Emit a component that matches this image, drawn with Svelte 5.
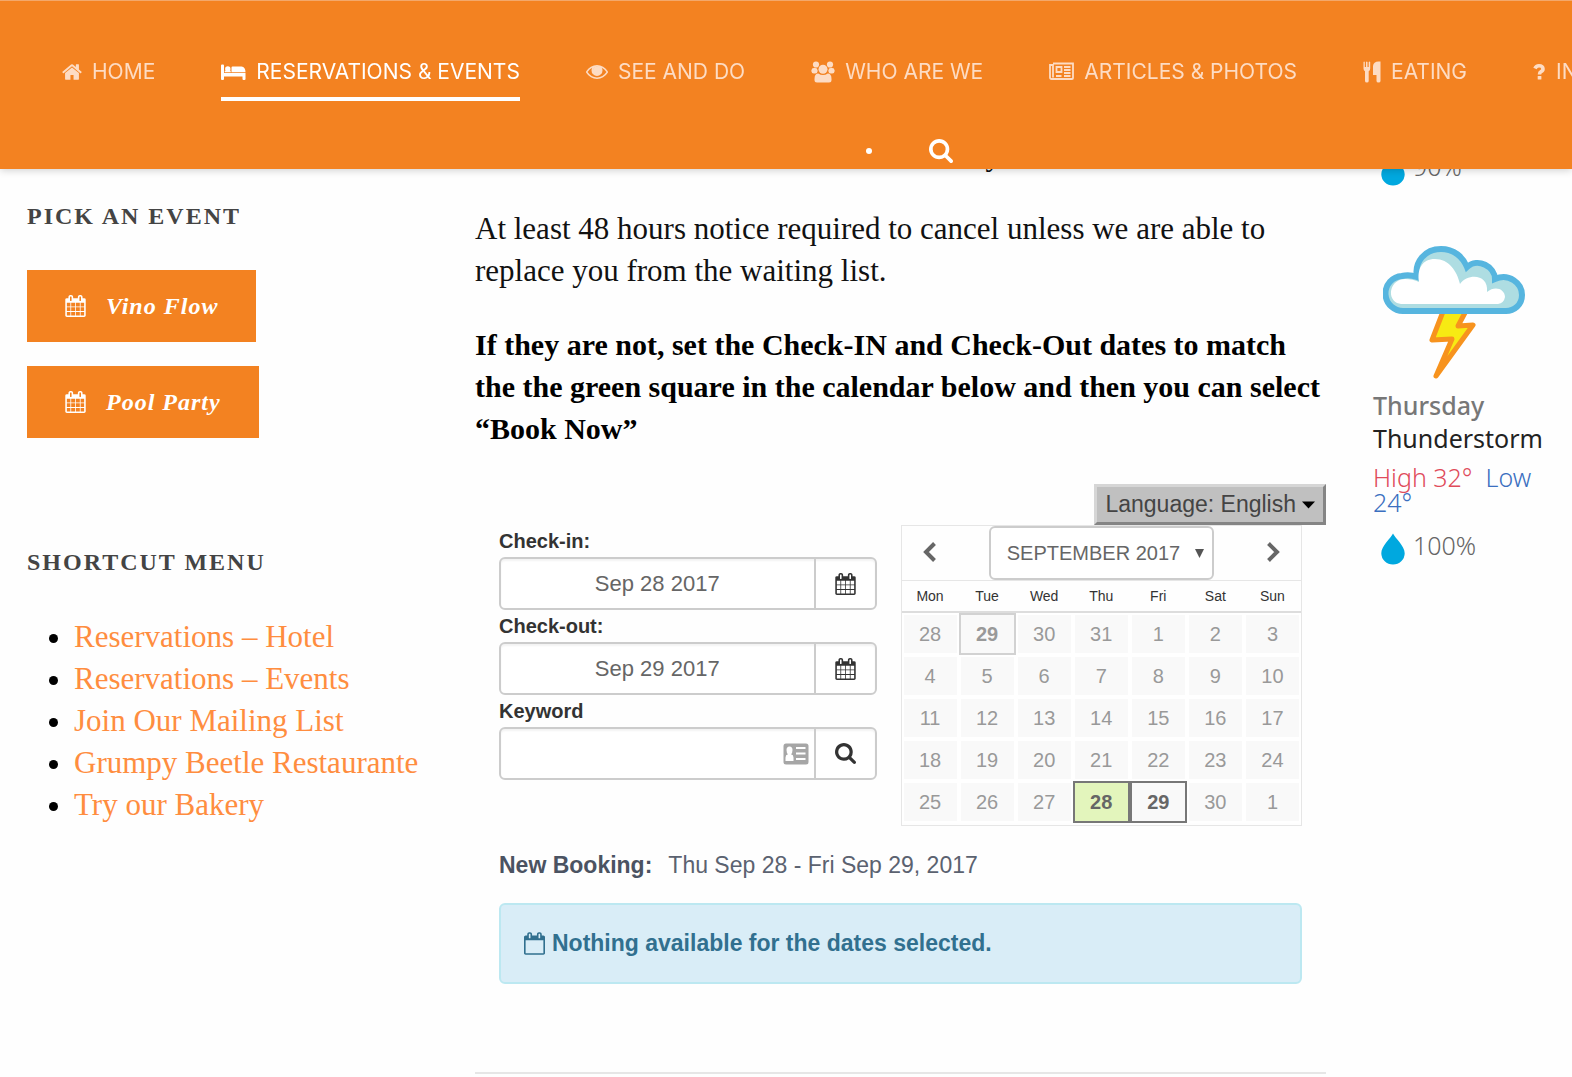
<script lang="ts">
	const navItems = [
		{ icon: 'home', label: 'HOME', active: false },
		{ icon: 'bed', label: 'RESERVATIONS & EVENTS', active: true },
		{ icon: 'eye', label: 'SEE AND DO', active: false },
		{ icon: 'users', label: 'WHO ARE WE', active: false },
		{ icon: 'news', label: 'ARTICLES & PHOTOS', active: false },
		{ icon: 'cutlery', label: 'EATING', active: false },
		{ icon: 'question', label: 'INFO', active: false }
	];

	const events = ['Vino Flow', 'Pool Party'];

	const shortcuts = [
		'Reservations – Hotel',
		'Reservations – Events',
		'Join Our Mailing List',
		'Grumpy Beetle Restaurante',
		'Try our Bakery'
	];

	const weekdays = ['Mon', 'Tue', 'Wed', 'Thu', 'Fri', 'Sat', 'Sun'];
	const weeks = [
		[28, 29, 30, 31, 1, 2, 3],
		[4, 5, 6, 7, 8, 9, 10],
		[11, 12, 13, 14, 15, 16, 17],
		[18, 19, 20, 21, 22, 23, 24],
		[25, 26, 27, 28, 29, 30, 1]
	];

	let checkIn = $state('Sep 28 2017');
	let checkOut = $state('Sep 29 2017');
	let keyword = $state('');

	function dayClass(week: number, day: number) {
		if (week === 0 && day === 29) return 'today';
		if (week === 4 && day === 28) return 'start';
		if (week === 4 && day === 29) return 'end';
		return '';
	}
</script>

{#snippet icon(name: string)}
	{#if name === 'home'}
		<svg class="icon" width="20" height="22" viewBox="64 0 1664 1792" aria-hidden="true">
			<path d="M1472 992v480q0 26-19 45t-45 19h-384v-384h-256v384h-384q-26 0-45-19t-19-45v-480q0-1 .5-3t.5-3l575-474 575 474q1 2 1 6zm223-69l-62 74q-8 9-21 11h-3q-13 0-21-7l-692-577-692 577q-12 8-24 7-13-2-21-11l-62-74q-8-10-7-23.5t11-21.5l719-599q32-26 76-26t76 26l244 204v-195q0-14 9-23t23-9h192q14 0 23 9t9 23v408l219 182q10 8 11 21.5t-7 23.5z" />
		</svg>
	{:else if name === 'bed'}
		<svg class="icon" width="25" height="22" viewBox="0 0 25 22" aria-hidden="true">
			<path d="M0 4.5Q0 3.500 1 3.500H2Q3 3.500 3 4.500V12H24.500V18Q24.500 19 23.500 19H22.500Q21.500 19 21.500 18V15.500H3V18Q3 19 2 19H1Q0 19 0 18ZM10.500 6.500Q10.500 5.500 11.500 5.500H20.500Q24.500 6 24.500 11.200H10.500ZM3.700 11.200V9.800H9.700V11.200Z" />
			<circle cx="6.800" cy="8" r="2.700" />
		</svg>
	{:else if name === 'eye'}
		<svg class="icon" width="22" height="22" viewBox="0 64 1792 1792" aria-hidden="true">
			<path d="M1664 960q-152-236-381-353 61 104 61 225 0 185-131.500 316.500t-316.500 131.500-316.500-131.500-131.500-316.500q0-121 61-225-229 117-381 353 133 205 333.500 326.500t434.500 121.500 434.500-121.500 333.500-326.500zm-720-384q0-20-14-34t-34-14q-125 0-214.500 89.500t-89.500 214.500q0 20 14 34t34 14 34-14 14-34q0-86 61-147t147-61q20 0 34-14t14-34zm848 384q0 34-20 69-140 230-376.500 368.500t-499.500 138.500-499.500-139-376.500-368q-20-35-20-69t20-69q140-229 376.500-368t499.500-139 499.500 139 376.500 368q20 35 20 69z" />
			<circle cx="896" cy="832" r="330" />
		</svg>
	{:else if name === 'users'}
		<svg class="icon" width="24" height="22" viewBox="0 0 24 22" aria-hidden="true">
			<circle cx="5" cy="3.500" r="3.100" />
			<circle cx="19" cy="3.500" r="3.100" />
			<rect x="0.500" y="7" width="6" height="5.500" rx="2.300" />
			<rect x="17.500" y="7" width="6" height="5.500" rx="2.300" />
			<circle cx="12" cy="8.200" r="4.500" />
			<path d="M3.500 18Q3.500 12.500 7.200 12.500Q12 15.500 16.800 12.500Q20.500 12.500 20.500 18V19Q20.500 21.500 18 21.500H6Q3.500 21.500 3.500 19Z" />
		</svg>
	{:else if name === 'news'}
		<svg class="icon line" width="25" height="22" viewBox="0 0 25 22" aria-hidden="true">
			<path d="M4 2.500H24V17Q24 18 23 18H2.500Q1 18 1 16.500V4H4V16.500" />
			<path d="M7.500 6H12.500V11H7.500ZM15 6H21.500M15 9H21.500M15 12H21.500M7 15H12.500M15 15H21.500" />
		</svg>
	{:else if name === 'cutlery'}
		<svg class="icon" width="18" height="22" viewBox="0 0 18 22" aria-hidden="true">
			<path d="M0.500 1Q1.200 0 1.800 1V6H3V1Q3.800 0 4.500 1V6H5.700V1Q6.500 0 7.200 1V7.500Q7.200 9.500 5.700 10.200V20Q5.700 21.500 3.900 21.500Q2 21.500 2 20V10.200Q0.500 9.500 0.500 7.500ZM10 5Q10.500 0.500 15.500 0.500H17.500V20Q17.500 21.500 15.500 21.500Q13.500 21.500 13.500 20V14H10Z" />
		</svg>
	{:else if name === 'question'}
		<svg class="icon" width="13" height="22" viewBox="0 0 13 22" aria-hidden="true">
			<path class="hook" d="M2 7.500Q3 4.800 6 4.800Q10 4.800 10 8Q10 9.800 8 10.700Q6.500 11.500 6.500 13.500" />
			<rect x="4.700" y="15" width="3.700" height="3.500" rx="0.500" />
		</svg>
	{:else if name === 'search'}
		<svg class="icon" width="24" height="24" viewBox="64 128 1664 1664" aria-hidden="true">
			<path d="M1216 832q0-185-131.500-316.500t-316.500-131.500-316.500 131.500-131.500 316.500 131.500 316.500 316.500 131.500 316.500-131.500 131.500-316.500zm512 832q0 52-38 90t-90 38q-54 0-90-38l-343-342q-179 124-399 124-143 0-273.500-55.500t-225-150-150-225-55.500-273.500 55.500-273.500 150-225 225-150 273.500-55.500 273.500 55.500 225 150 150 225 55.500 273.500q0 220-124 399l343 343q37 37 37 90z" />
		</svg>
	{:else if name === 'calendar'}
		<svg class="icon" width="21" height="22" viewBox="64 0 1664 1792" aria-hidden="true">
			<path d="M192 1664h288v-288h-288v288zm352 0h320v-288h-320v288zm-352-352h288v-320h-288v320zm352 0h320v-320h-320v320zm-352-384h288v-288h-288v288zm736 736h320v-288h-320v288zm-384-736h320v-288h-320v288zm768 736h288v-288h-288v288zm-384-352h320v-320h-320v320zm-352-864v-288q0-13-9.500-22.500t-22.500-9.500h-64q-13 0-22.500 9.500t-9.500 22.500v288q0 13 9.500 22.500t22.500 9.500h64q13 0 22.500-9.500t9.500-22.500zm736 864h288v-320h-288v320zm-384-384h320v-288h-320v288zm384 0h288v-288h-288v288zm32-480v-288q0-13-9.500-22.500t-22.500-9.500h-64q-13 0-22.500 9.500t-9.500 22.500v288q0 13 9.500 22.500t22.500 9.500h64q13 0 22.500-9.500t9.500-22.500zm384-64v1280q0 52-38 90t-90 38h-1408q-52 0-90-38t-38-90v-1280q0-52 38-90t90-38h128v-96q0-66 47-113t113-47h64q66 0 113 47t47 113v96h384v-96q0-66 47-113t113-47h64q66 0 113 47t47 113v96h128q52 0 90 38t38 90z" />
		</svg>
	{:else if name === 'calendar-o'}
		<svg class="icon" width="21" height="23" viewBox="64 0 1664 1792" aria-hidden="true">
			<path d="M192 1664h1408v-1024h-1408v1024zm384-1216v-288q0-13-9.500-22.500t-22.500-9.500h-64q-13 0-22.500 9.500t-9.500 22.500v288q0 13 9.500 22.500t22.500 9.500h64q13 0 22.500-9.500t9.500-22.500zm768 0v-288q0-13-9.500-22.500t-22.500-9.500h-64q-13 0-22.500 9.500t-9.500 22.500v288q0 13 9.500 22.500t22.500 9.500h64q13 0 22.500-9.500t9.500-22.500zm384-64v1280q0 52-38 90t-90 38h-1408q-52 0-90-38t-38-90v-1280q0-52 38-90t90-38h128v-96q0-66 47-113t113-47h64q66 0 113 47t47 113v96h384v-96q0-66 47-113t113-47h64q66 0 113 47t47 113v96h128q52 0 90 38t38 90z" />
		</svg>
	{:else if name === 'drop'}
		<svg width="24" height="32" viewBox="0 0 24 32" aria-hidden="true">
			<path fill="#00a8df" d="M12 0.500C14 5 23.700 13 23.700 20.300A11.700 11.200 0 0 1 0.300 20.300C0.300 13 10 5 12 0.500Z" />
		</svg>
	{/if}
{/snippet}

<header>
	<nav>
		<ul class="menu">
			{#each navItems as item}
				<li>
					<a href="#{item.icon}" class:active={item.active}>
						{@render icon(item.icon)}
						{item.label}
					</a>
				</li>
			{/each}
		</ul>
		<div class="tools">
			<span class="dot"></span>
			<button class="search" aria-label="Search">{@render icon('search')}</button>
		</div>
	</nav>
</header>

<div class="page">
	<aside class="sidebar">
		<section>
			<h2>PICK AN EVENT</h2>
			<div class="events">
				{#each events as event}
					<a class="event" href="#events">
						{@render icon('calendar')}
						{event}
					</a>
				{/each}
			</div>
		</section>
		<section>
			<h2>SHORTCUT MENU</h2>
			<ul class="shortcuts">
				{#each shortcuts as shortcut}
					<li><a href="#shortcut">{shortcut}</a></li>
				{/each}
			</ul>
		</section>
	</aside>

	<main>
		<!-- scrolled up behind the fixed header -->
		<p class="scrolled">y</p>
		<p>
			At least 48 hours notice required to cancel unless we are able to replace you from the
			waiting list.
		</p>
		<p class="strong">
			<strong>
				If they are not, set the Check-IN and Check-Out dates to match the the green square in the
				calendar below and then you can select “Book Now”
			</strong>
		</p>

		<div class="language-row">
			<button class="language">
				Language: English
				<svg width="13" height="8" viewBox="0 0 13 8" aria-hidden="true">
					<path d="M0 0.500H13L6.500 7.500Z" />
				</svg>
			</button>
		</div>

		<div class="booking">
			<form class="dates">
				<label for="check-in">Check-in:</label>
				<div class="group">
					<input id="check-in" type="text" bind:value={checkIn} />
					<button type="button" aria-label="Pick check-in date">{@render icon('calendar')}</button>
				</div>
				<label for="check-out">Check-out:</label>
				<div class="group">
					<input id="check-out" type="text" bind:value={checkOut} />
					<button type="button" aria-label="Pick check-out date">{@render icon('calendar')}</button>
				</div>
				<label for="keyword">Keyword</label>
				<div class="group">
					<input id="keyword" type="text" bind:value={keyword} />
					<svg class="card" width="26" height="22" viewBox="0 0 26 22" aria-hidden="true">
						<rect x="0.500" y="0.500" width="25" height="21" rx="2.500" fill="#a6a6a6" />
						<path
							fill="#fff"
							d="M13 4H22.500V6H13ZM13 9.500H22.500V11.500H13ZM13 15H22.500V17H13ZM2.500 18V14.500Q2.500 11.800 5 11.200Q3.500 10 3.500 7Q3.500 3.500 6.500 3.500Q9.500 3.500 9.500 7Q9.500 10 8 11.200Q10.500 11.800 10.500 14.500V18Z"
						/>
					</svg>
					<button type="button" class="find" aria-label="Search">{@render icon('search')}</button>
				</div>
			</form>

			<div class="calendar">
				<div class="month">
					<button aria-label="Previous month">
						<svg width="16" height="22" viewBox="0 0 16 22" aria-hidden="true">
							<path d="M12.500 2.500L4 11L12.500 19.500" />
						</svg>
					</button>
					<div class="month-select">
						<select aria-label="Month">
							<option>SEPTEMBER 2017</option>
						</select>
						<svg width="9" height="9" viewBox="0 0 9 9" aria-hidden="true">
							<path d="M0 0H9L4.500 9Z" />
						</svg>
					</div>
					<button aria-label="Next month">
						<svg width="16" height="22" viewBox="0 0 16 22" aria-hidden="true">
							<path d="M3.500 2.500L12 11L3.500 19.500" />
						</svg>
					</button>
				</div>
				<table>
					<thead>
						<tr>
							{#each weekdays as weekday}
								<th>{weekday}</th>
							{/each}
						</tr>
					</thead>
					<tbody>
						{#each weeks as week, i}
							<tr>
								{#each week as day}
									<td class={dayClass(i, day)}>{day}</td>
								{/each}
							</tr>
						{/each}
					</tbody>
				</table>
			</div>
		</div>

		<p class="summary">
			<strong>New Booking:</strong>
			<span>Thu Sep 28 - Fri Sep 29, 2017</span>
		</p>
		<div class="alert" role="status">
			{@render icon('calendar-o')}
			Nothing available for the dates selected.
		</div>
		<hr />
	</main>

	<aside class="weather">
		<div class="rain">{@render icon('drop')}<span>90%</span></div>
		<svg class="storm" width="144" height="136" viewBox="0 0 144 136" aria-hidden="true">
			<path
				fill="#f7ea13"
				stroke="#f7931e"
				stroke-width="5"
				stroke-linejoin="round"
				d="M61 64L49 95L69 94L53 131L90 80L75 81L84 64Z"
			/>
			<path
				fill="#aedde2"
				stroke="#56b5df"
				stroke-width="6"
				d="M21 66A17.500 17.500 0 0 1 19 31Q26 29 34 32C31 17 42 4 58 4C71 4 80 12 84 22C95 12 112 22 112 34C126 28 139 38 139 50C139 60 131 66 123 66Z"
			/>
			<path
				fill="#fff"
				d="M14 58C3 52 8 34 22 34Q30 34 36 37C34 24 39 14 52 14C66 14 74 26 77 39C85 28 106 29 104 47C112 40 122 44 122 52Q121 58 115 59H18Z"
			/>
		</svg>
		<div class="day">Thursday</div>
		<div class="condition">Thunderstorm</div>
		<div class="temps"><span class="high">High 32°</span>&nbsp; <span class="low">Low 24°</span></div>
		<div class="rain">{@render icon('drop')}<span>100%</span></div>
	</aside>
</div>

<style>
	:global(body) {
		background: #fefefe;
	}

	header {
		position: fixed;
		z-index: 10;
		top: 0;
		left: 0;
		right: 0;
		height: 169px;
		box-sizing: border-box;
		padding: 48px 0 0 62px;
		overflow: hidden;
		background: #f38221;
		border-top: 1px solid #f3a86b;
		box-shadow: 0 1px 8px rgba(0, 0, 0, 0.2);
	}

	ul {
		margin: 0;
		padding: 0;
	}

	.icon {
		flex-shrink: 0;
		fill: currentColor;
	}

	.icon.line {
		fill: none;
		stroke: currentColor;
		stroke-width: 1.8;
	}

	.hook {
		fill: none;
		stroke: currentColor;
		stroke-width: 3.6;
	}

	.menu {
		display: flex;
		gap: 66px;
		list-style: none;
	}

	.menu a {
		display: flex;
		align-items: center;
		gap: 10px;
		padding-bottom: 2px;
		border-bottom: 4px solid transparent;
		color: #fddcc4;
		font-family: Inter, sans-serif;
		font-size: 21px;
		line-height: 46px;
		text-decoration: none;
		white-space: nowrap;
	}

	.menu a.active {
		border-color: #fff;
		color: #fff;
	}

	.tools {
		display: flex;
		align-items: center;
		justify-content: center;
		gap: 57px;
		height: 36px;
		margin-top: 32px;
		padding-left: 185px;
	}

	.dot {
		width: 6px;
		height: 6px;
		border-radius: 50%;
		background: #fff;
	}

	button {
		padding: 0;
		border: 0;
		background: none;
		cursor: pointer;
	}

	.search {
		display: flex;
		color: #fff;
	}

	.page {
		display: grid;
		grid-template-columns: 401px minmax(0, 1fr) 199px;
		gap: 47px;
		padding: 134px 0 0 27px;
	}

	.sidebar {
		padding-top: 62px;
	}

	h2 {
		margin: 0 0 34px;
		color: #444;
		font: bold 24px/40px 'Liberation Serif', serif;
		letter-spacing: 2px;
	}

	.events {
		display: flex;
		flex-direction: column;
		align-items: flex-start;
		gap: 24px;
		padding-bottom: 104px;
	}

	.event {
		display: flex;
		align-items: center;
		gap: 20px;
		padding: 0 38px;
		background: #f38221;
		color: #fff;
		font: italic bold 24px/72px 'Liberation Serif', serif;
		letter-spacing: 1px;
		text-decoration: none;
	}

	.shortcuts {
		padding-left: 47px;
		font: 31px/42px 'Liberation Serif', serif;
	}

	.shortcuts a {
		color: #ff8d3f;
		text-decoration: none;
	}

	main {
		color: #111;
		font-family: 'Liberation Sans', sans-serif;
	}

	main p {
		margin: 0 0 32px;
		font: 31px/42px 'Liberation Serif', serif;
	}

	main .scrolled {
		padding-left: 60%;
	}

	main .strong {
		margin-bottom: 34px;
		color: #000;
		font-size: 30px;
	}

	.language-row {
		display: flex;
		justify-content: flex-end;
	}

	.language {
		display: flex;
		align-items: center;
		gap: 6px;
		padding: 0 8px;
		border: 3px solid;
		border-color: #d6d6d6 #858585 #858585 #d6d6d6;
		background: #c0c0c0;
		color: #444;
		font: 23px/35px 'Liberation Sans', sans-serif;
	}

	.booking {
		display: flex;
		gap: 24px;
		padding: 0 24px;
	}

	.dates {
		flex: 1;
		min-width: 0;
	}

	label {
		display: block;
		color: #333;
		font-size: 20px;
		font-weight: bold;
		line-height: 32px;
	}

	.group {
		display: flex;
		height: 53px;
		box-sizing: border-box;
		border: 2px solid #ccc;
		border-radius: 6px;
		background: #fff;
		box-shadow: inset 0 2px 2px rgba(0, 0, 0, 0.05);
	}

	.group input {
		flex: 1;
		min-width: 0;
		padding: 0;
		border: 0;
		background: none;
		color: #666;
		font: 22px 'Liberation Sans', sans-serif;
		text-align: center;
	}

	.group button {
		display: flex;
		align-items: center;
		justify-content: center;
		width: 61px;
		border-left: 2px solid #ccc;
		color: #333;
	}

	.find .icon {
		width: 21px;
		height: 21px;
	}

	.card {
		align-self: center;
		margin-right: 5px;
	}

	.calendar {
		width: 50%;
		box-sizing: border-box;
		padding-bottom: 2px;
		border: 1px solid #e6e6e6;
	}

	.month {
		display: flex;
		align-items: center;
		justify-content: space-between;
		height: 54px;
		border-bottom: 1px solid #e6e6e6;
	}

	.month button {
		width: 57px;
	}

	.month button path {
		fill: none;
		stroke: #666;
		stroke-width: 4;
	}

	.month-select {
		position: relative;
	}

	.month-select select {
		width: 225px;
		height: 54px;
		padding: 0 16px;
		appearance: none;
		border: 2px solid #ccc;
		border-radius: 6px;
		background: #fff;
		color: #666;
		font: 20px 'Liberation Sans', sans-serif;
	}

	.month-select svg {
		position: absolute;
		right: 10px;
		top: 23px;
		fill: #555;
		pointer-events: none;
	}

	table {
		width: 100%;
		table-layout: fixed;
		border-collapse: separate;
		border-spacing: 0;
	}

	th {
		height: 30px;
		padding: 0;
		border-bottom: 2px solid #ddd;
		color: #333;
		font-size: 14px;
		font-weight: normal;
	}

	td {
		height: 38px;
		padding: 0;
		border: 2px solid #fff;
		background: #f9f9f9;
		background-clip: padding-box;
		color: #999;
		font-size: 20px;
		text-align: center;
	}

	td.today {
		border-color: #d2d2d2;
		font-weight: bold;
	}

	td.start,
	td.end {
		border-color: #777;
		color: #666;
		font-weight: bold;
	}

	td.start {
		background-color: #e3f5bc;
	}

	main .summary {
		display: flex;
		gap: 16px;
		margin: 23px 24px 22px;
		color: #5b6270;
		font: 23px/32px 'Liberation Sans', sans-serif;
	}

	.summary strong {
		color: #4b5362;
	}

	.alert {
		display: flex;
		align-items: center;
		gap: 7px;
		margin: 0 24px 88px;
		padding: 0 23px;
		border: 2px solid #bce8f1;
		border-radius: 6px;
		background: #d9edf7;
		color: #31708f;
		font-size: 23px;
		font-weight: bold;
		line-height: 77px;
	}

	hr {
		margin: 0;
		border: 0;
		border-top: 2px solid #e6e6e6;
	}

	.weather {
		padding: 20px 20px 0 0;
		font-family: 'Noto Sans', sans-serif;
		font-size: 25px;
	}

	.rain {
		display: flex;
		gap: 8px;
		padding-left: 8px;
		color: #666;
		font-weight: 300;
		line-height: 24px;
	}

	.storm {
		display: block;
		margin: 59px 0 8px 10px;
	}

	.day {
		color: #777;
		font-weight: 500;
		line-height: 32px;
	}

	.condition {
		color: #222;
		line-height: 34px;
	}

	.temps {
		margin: 10px 0 18px;
		font-weight: 300;
		line-height: 25px;
	}

	.high {
		color: #e04b5a;
	}

	.low {
		color: #3b6fc0;
	}
</style>
